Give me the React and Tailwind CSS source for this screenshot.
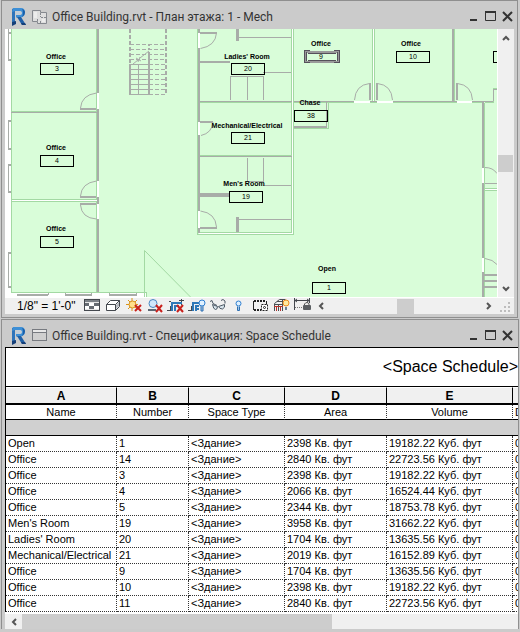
import React from "react";

const columns = [
  { letter: "A", title: "Name", width: "w-[111px]" },
  { letter: "B", title: "Number", width: "w-[72px]" },
  { letter: "C", title: "Space Type", width: "w-[96px]" },
  { letter: "D", title: "Area", width: "w-[102px]" },
  { letter: "E", title: "Volume", width: "w-[126px]" },
];

const spaces = [
  ["Open", "1", "2398", "19182.22"],
  ["Office", "14", "2840", "22723.56"],
  ["Office", "3", "2398", "19182.22"],
  ["Office", "4", "2066", "16524.44"],
  ["Office", "5", "2344", "18753.78"],
  ["Men's Room", "19", "3958", "31662.22"],
  ["Ladies' Room", "20", "1704", "13635.56"],
  ["Mechanical/Electrical", "21", "2019", "16152.89"],
  ["Office", "9", "1704", "13635.56"],
  ["Office", "10", "2398", "19182.22"],
  ["Office", "11", "2840", "22723.56"],
];

// name, number, label centre, label baseline, tag left, tag top
const rooms = [
  ["Office", "3", 56, 59, 40, 63],
  ["Office", "4", 56, 150, 40, 155],
  ["Office", "5", 56, 231, 40, 236],
  ["Ladies' Room", "20", 247, 59, 231, 63],
  ["Mechanical/Electrical", "21", 247, 128, 231, 132],
  ["Men's Room", "19", 244, 186, 229, 191],
  ["Office", "9", 321, 46, 304, 51],
  ["Office", "10", 411, 46, 396, 51],
  ["Chase", "38", 310, 105, 294, 110],
  ["Open", "1", 327, 271, 312, 282],
];

function Logo() {
  return (
    <svg className="w-[18px] h-[20px] shrink-0" viewBox="0 0 18 20" aria-hidden="true">
      <path d="M2 2l3-1v15l-3 2z" fill="#2f74ba" />
      <path d="M3 1h8q4 0 4 4.500 0 4-4 5H6V8h4q2 0 2-2t-2-2H5l-3 1z" fill="#3d8fd6" />
      <path d="M6 4h4q2 1 1.500 2.500L10 8H6z" fill="#c3ced8" />
      <path d="M7 10h4l5 8h-4z" fill="#1f5fa6" />
      <path d="M2 15l4-1v3l-4 2zM11 16l1 2h4l-1-2z" fill="#153f78" />
      <path d="M12 2q3 1 3 3.500T12 10q1-2 1-4.500T12 2z" fill="#1b5fa8" />
    </svg>
  );
}

function PlanIcon() {
  return (
    <svg className="w-[16px] h-[15px] shrink-0" viewBox="0 0 16 15" fill="none" aria-hidden="true">
      <path d="M0.500 0.500h8v2h6v11h-9v-2h-5z" fill="#dedede" stroke="#85888e" />
      <path d="M8.500 3v4M5.500 9v2M9 7.500h5M8.500 11v2" stroke="#85888e" strokeDasharray="2 1" />
      <path d="M10 9h3v3h-3zM2 2h3v6H2z" fill="#ececec" />
    </svg>
  );
}

function SheetIcon() {
  return (
    <svg className="w-[16px] h-[15px] shrink-0" viewBox="0 0 16 15" fill="none" aria-hidden="true">
      <rect x="0.500" y="1.500" width="14" height="11" fill="#cfcfcf" stroke="#777a80" />
      <path d="M1 2h13v2H1z" fill="#e8e8e8" />
      <path d="M1 4.500h13" stroke="#777a80" />
    </svg>
  );
}

function TitleBar({ icon, title, className }) {
  return (
    <header className={`flex items-center ${className}`}>
      <div className="w-[27px] pl-[5px] shrink-0">
        <Logo />
      </div>
      {icon}
      <h2 className="ml-1 flex-1 min-w-0 truncate text-[12px] leading-5 text-[#333]">{title}</h2>
      <div className="flex items-center gap-1 shrink-0">
        <button aria-label="Minimize" className="w-[13px] h-4">
          <svg className="w-[13px] h-4" viewBox="0 0 13 16">
            <path d="M3 10h7v2H3z" fill="#333" />
          </svg>
        </button>
        <button aria-label="Maximize" className="w-[13px] h-4">
          <svg className="w-[13px] h-4" viewBox="0 0 13 16" fill="none" stroke="#333">
            <path d="M1.500 3v8.500h10V3" />
            <path d="M1 3h11" strokeWidth="2" />
          </svg>
        </button>
        <button aria-label="Close" className="w-[13px] h-4">
          <svg className="w-[13px] h-4" viewBox="0 0 13 16" fill="none" stroke="#333" strokeWidth="2">
            <path d="M2 3l9 9M11 3l-9 9" />
          </svg>
        </button>
      </div>
    </header>
  );
}

function Arrow({ d, label }) {
  return (
    <button aria-label={label} className="w-4 h-4 shrink-0">
      <svg className="w-4 h-4" viewBox="0 0 16 16" fill="none" stroke="#555" strokeWidth="2">
        <path d={d} />
      </svg>
    </button>
  );
}

const LEFT = "M11 5l-3 3 3 3";
const RIGHT = "M6 5l3 3-3 3";
const UP = "M5 11l3-3 3 3";
const DOWN = "M5 6l3 3 3-3";

function FloorPlan() {
  return (
    <svg
      className="block w-full h-full"
      viewBox="5 29 492 268"
      preserveAspectRatio="xMinYMin slice"
      fill="none"
      role="img"
      aria-label="1 - Mech"
    >
      <path d="M11 29h486v268H146v-5H11z" fill="#d9fdd9" />

      {/* outer walls and windows */}
      <g stroke="#a8aca8" shapeRendering="crispEdges">
        <path d="M8.500 29v31M8.500 120v29M8.500 164v28M8.500 252v35" />
        <path d="M8 32.500h3M8 59.500h3M8 120.500h3M8 148.500h3M8 164.500h3M8 191.500h3M8 252.500h3M8 286.500h3" strokeWidth="2" />
        <path d="M17 295h31M65 295h27M109 295h28" strokeWidth="2" />
        <path d="M48.500 292v3M65.500 292v3M91.500 292v3M109.500 292v3M136.500 292v3" />
      </g>

      {/* space boundaries */}
      <g stroke="#a3d9a3" shapeRendering="crispEdges">
        <path d="M11.500 29v263.500H146.500v5M96.500 29v263M11 111.500h86M11 199.500h86M11 201.500h86" />
        <path d="M197.500 29v205.500H293.500V29M291.500 29v203H200M198 102.500h95M198 155.500h93" />
        <path d="M294 102.500h189M372.500 29v72M374.500 29v72M454.500 29v72M484.500 102.500v195M485 102.500h8v-14h4" />
        <path d="M485 188.500h12M485 190.500h12M484 280.500h13M482.500 102v195M294 128.500h34v-26" />
      </g>
      <path d="M144.500 297v-46.500l46 46.500" stroke="#a3d9a3" />
      <g stroke="#fff" shapeRendering="crispEdges">
        <path d="M12 200.500h85M199 233.500h94M292.500 29v204M373.500 29v72M485 189.500h12" />
      </g>

      {/* inner walls */}
      <g stroke="#a8aca8" strokeWidth="2" shapeRendering="crispEdges">
        <path d="M98 29v263M199 29v204M453 29v73M483 102v195" />
        <path d="M200 62h30M294 127h33" />
        <path d="M237 29v12M237 217v15" strokeWidth="3" />
        <path d="M200 195h29" strokeWidth="4" />
        <path d="M484 275h13M484 281h13M484 287h13" />
      </g>
      <g stroke="#a8aca8" shapeRendering="crispEdges">
        <path d="M11 112.500h86M198 101.500h94M198 156.500h94M294 101.500h199M326.500 102v26" />
        <path d="M238 37.500h53M230.500 100v-24h33M247.500 76v24M263.500 76v24M263 72.500h28" />
        <path d="M247.500 158v23h16M263.500 158v24M263 185.500h28M238 219.500h53" />
        <path d="M485 183.500h12M493.500 101v-12h4" />
      </g>

      {/* door openings */}
      <g stroke="#fff" strokeWidth="2" shapeRendering="crispEdges">
        <path d="M98 93v16M98 181v16M98 204v15M199 33v15M199 122v13M199 211v17" />
        <path d="M354 102h16M377 102h16M457 102h15M483 168v15M483 258v14" />
      </g>
      <g stroke="#a8aca8" strokeWidth="2" shapeRendering="crispEdges">
        <path d="M80 109h16M80 197h16M80 204h16M200 33h17M200 122h13M200 228h17" />
        <path d="M370 83v17M377 83v17M457 83v17" />
      </g>
      <g stroke="#a8aca8">
        <path d="M80.500 108q1-13 16-15M80.500 196q1-13 16-15M80.500 205q1 13 16 14" />
        <path d="M216.500 33q-1 13-16 15.500M213 122q-1 11-12 13.500M216.500 227q-1-14-16-16" />
        <path d="M354.500 100q1-15 15-16.500M392.500 100q-1-15-15-16.500M472.500 100q-1-15-15-16.500" />
        <path d="M485 167.500q8 0 12 6M485 258.500q8 1 12 6" />
      </g>

      {/* stairs */}
      <g stroke="#a8aca8" shapeRendering="crispEdges">
        <path d="M130 29v35M166 29v66" strokeWidth="2" strokeDasharray="4 2" />
        <path
          d="M130 44.500h36M130 49.500h36M130 54.500h36M130 59.500h36M149 64.500h17M149 69.500h17M149 74.500h17M149 79.500h17M149 84.500h17M149 89.500h17M149 94.500h17"
          strokeDasharray="4 2"
        />
        <path d="M130 64.500h19M130 69.500h19M130 74.500h19M130 79.500h19M130 84.500h19M130 89.500h19M130 94.500h19M138.500 65v29" />
        <path d="M130 64v31M149 52v43" strokeWidth="2" />
        <path d="M149 44v8" strokeWidth="2" strokeDasharray="2 2" />
      </g>
      <path d="M133 64l5-4M140 58l9-7M136 58l5 3M138 62l2-5" stroke="#a8aca8" />

      {/* room tags */}
      <g shapeRendering="crispEdges">
        {rooms.map(([name, number, , , x, y]) =>
          number === "9" ? (
            <g key={number}>
              <rect x="306" y="52" width="32" height="10" stroke="#9a9a9a" strokeWidth="2" />
              <path d="M310 50.500h-5.500v12h5.500M334 50.500h5.500v12H334M306.500 52v9M337.500 52v9" stroke="#55505a" />
              <path d="M308 53.500h28M308 60.500h28" stroke="#55505a" />
            </g>
          ) : (
            <rect key={name + number} x={x + 0.5} y={y + 0.5} width="33" height="11" stroke="#000" />
          )
        )}
        <path d="M498 51.500h-4.500v11h4.500" stroke="#000" />
      </g>
      <g fill="#000" textAnchor="middle" className="font-['Liberation_Sans',sans-serif] text-[7px]">
        {rooms.map(([name, number, cx, base, x, y]) => (
          <React.Fragment key={name + number}>
            <text x={cx} y={base} className="font-bold">{name}</text>
            <text x={x + 17} y={y + 8}>{number}</text>
          </React.Fragment>
        ))}
      </g>
    </svg>
  );
}

const redCross = <path d="M10 7l6 7M16 7l-6 7" stroke="#c8201c" strokeWidth="2" />;

const bulb = (
  <>
    <circle cx="14" cy="5" r="3" fill="#dff0ff" stroke="#2f7fd0" />
    <path d="M13 8v5h2V8" fill="#9cc4ea" stroke="#2f6fb0" />
  </>
);

const viewControls = [
  {
    label: "Detail Level",
    art: (
      <>
        <rect x="1.500" y="1.500" width="15" height="11" fill="#e6e6e6" stroke="#44484e" />
        <path d="M2 2h14v2H2z" fill="#7b8086" />
        <path d="M2 5h4v3H2zM11 5h5v3h-5zM6 8h5v3H6z" fill="#666b72" />
        <path d="M6 5h5v3H6zM2 8h4v3H2zM11 8h5v3h-5z" fill="#fff" />
      </>
    ),
  },
  {
    label: "Visual Style",
    art: (
      <g stroke="#44484e">
        <path d="M2.500 6.500l4-4h9v6l-4 4h-9z" fill="#fff" />
        <path d="M2.500 6.500h9v6M11.500 6.500l4-4" />
        <path d="M12 7l3-3v4l-3 3z" fill="#b8bcc2" stroke="none" />
      </g>
    ),
  },
  {
    label: "Sun Path Off",
    art: (
      <>
        <path d="M7 0v13M1 6.500h12M3 2l9 9M12 2l-9 9" stroke="#d9941c" />
        <circle cx="7.500" cy="6.500" r="3.500" fill="#ffe08a" stroke="#d9941c" />
        <path d="M10 7l6 6M16 7l-6 6" stroke="#c8201c" strokeWidth="2" />
      </>
    ),
  },
  {
    label: "Shadows Off",
    art: (
      <>
        <path d="M2 11h8v2H2z" fill="#5b6773" />
        <circle cx="7" cy="5.500" r="4" fill="#cfe7fb" stroke="#4a87c0" />
        {redCross}
      </>
    ),
  },
  {
    label: "Do Not Crop View",
    art: (
      <>
        <path d="M0 12.500h4M3.500 8v5M14.500 1v6" stroke="#44484e" />
        <path d="M5 13V5h10M8 13V8h4" stroke="#2e78b8" strokeWidth="2" />
        <path d="M2 3.500h2M12 2.500h5" stroke="#44484e" />
        {redCross}
      </>
    ),
  },
  {
    label: "Show Crop Region",
    art: (
      <>
        <path d="M0 12.500h4M3.500 8v5" stroke="#44484e" />
        <path d="M5 13V5h6M8 13V8h3M8 11h3" stroke="#2e78b8" strokeWidth="2" />
        {bulb}
      </>
    ),
  },
  {
    label: "Temporary Hide/Isolate",
    art: (
      <g stroke="#4d5965">
        <path d="M1 3.500l2-1 1 3 4 2M12 2.500l2-1q3 1 2 4" />
        <path d="M3.500 6.500l5 2q0 3-2 3t-3-5zM9.500 8.500l6-2q1 3-2 4.500-3 0-4-2.500z" fill="#d6e2ea" />
      </g>
    ),
  },
  {
    label: "Reveal Hidden Elements",
    art: (
      <>
        <circle cx="8.500" cy="5.500" r="2.500" fill="#dff0ff" stroke="#2f7fd0" />
        <path d="M7.500 8.500v4h2v-4" fill="#9cc4ea" stroke="#2f6fb0" />
      </>
    ),
  },
  {
    label: "Temporary View Properties",
    art: (
      <g stroke="#222">
        <path d="M3 3h12" strokeWidth="2" strokeDasharray="2 1" />
        <path d="M3 12h7" strokeWidth="2" strokeDasharray="2 1" />
        <path d="M2.500 3v9M15.500 3v4" />
        <rect x="10.500" y="6.500" width="6" height="6" fill="#fff" strokeDasharray="2 1" />
        <circle cx="13.500" cy="9.500" r="1" />
      </g>
    ),
  },
  {
    label: "Analytical Model",
    art: (
      <>
        <path d="M2.500 13V5.500l5-4h6M6.500 13V6M10.500 13V2M2 6.500h9M5 3.500h8" stroke="#4a4f55" />
        <path d="M2 8.500h9M4.500 9v4M8.500 9v4" stroke="#b8322c" />
        <circle cx="14" cy="5" r="3" fill="#ffe9a0" stroke="#ee8b1d" />
        <path d="M13 9h2v3h-2z" fill="#6b7f94" />
      </>
    ),
  },
  {
    label: "Reveal Constraints",
    art: (
      <>
        <path d="M1.500 0v12M16.500 0v5M2 2.500h14M4 1L2 2.500 4 4M14 1l2 1.500L14 4" stroke="#44484e" />
        <path d="M2 9.500h8" stroke="#777" strokeDasharray="1 1" />
        <path d="M11.500 8V6q1-1.500 2.500-1.500T16 6v2" stroke="#555" />
        <rect x="10" y="7" width="8" height="5" rx="1" fill="#5b5f63" />
      </>
    ),
  },
];

function PlanWindow() {
  return (
    <section className="ml-px mr-0.5 p-[3px] pt-0 border border-[#8f8f8f] bg-[#cbcbcb]">
      <TitleBar
        icon={<PlanIcon />}
        title="Office Building.rvt - План этажа: 1 - Mech"
        className="h-7 pt-1"
      />
      <div className="flex h-[268px] bg-white">
        <div className="flex-1 min-w-0 overflow-hidden">
          <FloorPlan />
        </div>
        <div className="ml-px w-4 flex flex-col items-center bg-[#f0f0f0]">
          <Arrow d={UP} label="Scroll up" />
          <div className="flex-1 w-full pt-[110px]">
            <div className="h-[17px] w-[15px] bg-[#cdcdcd]" />
          </div>
          <Arrow d={DOWN} label="Scroll down" />
        </div>
      </div>
      <div className="flex items-center h-[17px] border-t border-white bg-[#f0f0f0]">
        <button className="w-[76px] pl-3 text-left text-[12px] leading-4 whitespace-nowrap text-black">
          1/8" = 1'-0"
        </button>
        <div className="flex">
          {viewControls.map(({ label, art }) => (
            <button key={label} aria-label={label} className="w-[21px] h-4 flex justify-center">
              <svg className="w-[18px] h-4" viewBox="0 0 18 16" fill="none">
                {art}
              </svg>
            </button>
          ))}
        </div>
        <div className="flex flex-1 min-w-0 items-center">
          <Arrow d={LEFT} label="Scroll left" />
          <div className="flex-1 pl-[69px]">
            <div className="h-[15px] w-[17px] bg-[#cdcdcd]" />
          </div>
          <Arrow d={RIGHT} label="Scroll right" />
        </div>
        <svg className="w-[17px] h-4 shrink-0" viewBox="0 0 17 16" fill="#bdbdbd" aria-hidden="true">
          <path d="M11 4h2v2h-2zM11 8h2v2h-2zM11 12h2v2h-2zM7 8h2v2H7zM7 12h2v2H7zM3 12h2v2H3z" />
        </svg>
      </div>
    </section>
  );
}

const cell = "h-4 p-0 pl-0.5 overflow-hidden border-b border-r border-dotted border-b-[#333] border-r-[#333] text-left";

function ScheduleTable() {
  return (
    <table className="table-fixed w-[620px] border-separate border-spacing-0 border-l border-black bg-white text-[11px] leading-[15px] text-black whitespace-nowrap">
      <thead>
        <tr className="leading-[14px]">
          {columns.map(({ letter, width }) => (
            <th
              key={letter}
              className={`${width} h-[18px] p-0 border-t border-t-white border-b-2 border-r border-b-black border-r-black bg-[#f0f0f0] text-[12px] font-bold`}
            >
              {letter}
            </th>
          ))}
          <th className="h-[18px] p-0 border-t border-t-white border-b-2 border-b-black bg-[#f0f0f0]" />
        </tr>
        <tr>
          {columns.map(({ title }) => (
            <th
              key={title}
              scope="col"
              className="h-[15px] p-0 leading-[14px] font-normal border-b border-b-black border-r border-r-[#333] [border-right-style:dotted]"
            >
              {title}
            </th>
          ))}
          <th scope="col" className="h-[15px] p-0 pl-0.5 leading-[14px] text-left font-normal border-b border-b-black">
            D
          </th>
        </tr>
      </thead>
      <tbody>
        <tr>
          <td colSpan={6} className="h-4 p-0 border-b border-black bg-[#d0d0d0]" />
        </tr>
        {spaces.map(([name, number, area, volume]) => (
          <tr key={number}>
            <td className={cell}>{name}</td>
            <td className={cell}>{number}</td>
            <td className={cell}>&lt;Здание&gt;</td>
            <td className={cell}>{area} Кв. фут</td>
            <td className={cell}>{volume} Куб. фут</td>
            <td className={cell}>0</td>
          </tr>
        ))}
      </tbody>
    </table>
  );
}

function ScheduleWindow() {
  return (
    <section className="mt-px ml-px mr-px pl-[3px] border border-b-0 border-[#8f8f8f] bg-[#cbcbcb]">
      <TitleBar
        icon={<SheetIcon />}
        title="Office Building.rvt - Спецификация: Space Schedule"
        className="h-[27px] pt-1 pr-1"
      />
      <div className="overflow-hidden bg-white pb-0.5">
        <h3 className="h-10 flex items-center justify-end border border-r-0 border-black text-[16px] leading-5 text-black">
          &lt;Space Schedule&gt;
        </h3>
        <ScheduleTable />
      </div>
      <div className="flex h-[15px] mb-[3px] items-center bg-[#f0f0f0]">
        <Arrow d={LEFT} label="Scroll left" />
        <div className="ml-px h-[15px] w-[310px] bg-[#cdcdcd]" />
      </div>
    </section>
  );
}

export default function App() {
  return (
    <main className="overflow-hidden bg-[#cbcbcb] font-['Liberation_Sans',Arial,sans-serif] [&_h2]:font-[Roboto,sans-serif]">
      <PlanWindow />
      <ScheduleWindow />
    </main>
  );
}
